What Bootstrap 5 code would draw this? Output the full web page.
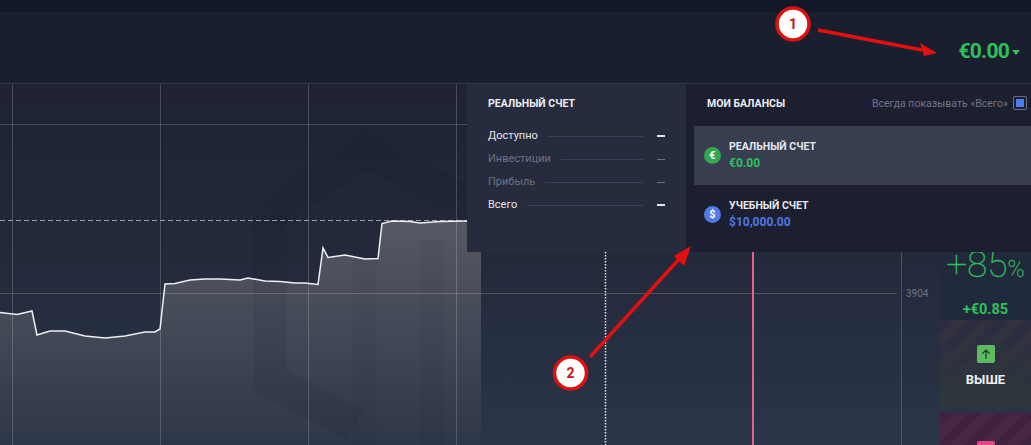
<!DOCTYPE html>
<html lang="ru">
<head>
<meta charset="utf-8">
<title>Балансы</title>
<link href="https://cdn.jsdelivr.net/npm/bootstrap@5.3.0/dist/css/bootstrap.min.css" rel="stylesheet">
<style>
html,body{height:445px;overflow:hidden;background:#1a1e2e;font-family:Roboto,"Liberation Sans",sans-serif}
.stage{width:1031px;height:445px;overflow:hidden}
.strip{height:12px;background:#131826}
.headbar{height:72px;background:#1a1f2f;border-bottom:1px solid #33384a;padding-right:11px}
.bal-top{color:#2fc05a;font-size:21px;font-weight:700;letter-spacing:-.75px;margin-top:8px;margin-right:2px}
.caret-top{width:0;height:0;border:4.5px solid transparent;border-top:5px solid #2fc05a;border-bottom:0;margin:9px 0 0 1px}
.work{height:361px;background:linear-gradient(#1e2233 0,#232a3c 50%,#2b3549 100%)}
.plot{width:940px}
.plot svg{display:block}
.rail{width:91px}
.rail-gap{height:168px;flex:none}
.rate{height:68px;flex:none;background:#212a3c;color:#2fc05a}
.rate-big{font-size:37px;font-weight:100;line-height:36px;margin-top:-5px;-webkit-text-stroke:.3px #2fc05a}
.rate-big small{font-size:23px}
.rate-sum{font-size:14.5px;font-weight:700;margin-top:11px}
.btn-up{height:88px;flex:none;background:linear-gradient(rgba(36,40,56,0),rgba(43,58,56,.75)),repeating-linear-gradient(135deg,#2d2c42 0 10px,#33303f 10px 20px);margin-bottom:5px}
.btn-down{height:60px;flex:none;background:repeating-linear-gradient(135deg,#3f2240 0 10px,#472544 10px 20px);padding-top:28px}
.sq{width:18px;height:18px;border-radius:2px}
.sq-g{background:#5dbb5f;margin-top:6px}
.sq-p{background:#e9447f}
.word{color:#eef0f4;font-size:13px;font-weight:700;margin-top:7px}
.pop{left:467px;top:84px;width:564px;height:168px;color:#fff}
.pop-l{width:219px;background:#272b3e;padding:13px 21px 0}
.pop-r{width:345px;background:#1c1f30}
.ttl{font-size:10.5px;font-weight:700;line-height:13px;color:#eceef2}
.stat{font-size:11px;line-height:13px;height:23px;color:#e4e6ec}
.stat.dim{color:#6d7181}
.stat i{flex:1;height:1px;background:#3a3f53;margin:2px 14px 0 10px;display:block}
.stat b{width:8px;height:2px;background:currentColor;display:block;margin-top:1px}
.stat.dim b{height:1px}
.stats{margin-top:14px}
.opt{color:#717586;font-size:10.5px;line-height:13px}
.chk{width:14px;height:14px;border:1px solid #6b7085;border-radius:2px;margin-left:5px;padding:2px}
.chk span{display:block;width:8px;height:8px;background:#4c7cf0}
.pop-head{height:38px;margin-bottom:4px;padding:0 4px 0 21px}
.acct{height:59px;margin-left:8px;padding-left:10px}
.acct.on{background:#393d50}
.coin{width:17px;height:17px;border-radius:50%;color:#fff;font-size:11px;font-weight:700;line-height:17px;margin-right:8px;text-align:center}
.coin-e{background:#2fa84f}
.coin-d{background:#5479e8}
.nm{font-size:10.5px;font-weight:700;line-height:13px;color:#e6e8ee}
.am{font-size:12px;font-weight:700;line-height:15px;margin-top:3px}
.am-g{color:#2fc05a}
.am-b{color:#4f78e0}
.notes{left:0;top:0;pointer-events:none}
</style>
</head>
<body>
<div class="stage position-relative">
  <div class="strip"></div>
  <header class="headbar d-flex justify-content-end align-items-center">
    <span class="bal-top">€0.00</span><span class="caret-top"></span>
  </header>
  <main class="work d-flex">
    <section class="plot">
      <svg width="940" height="361" viewBox="0 84 940 361">
        <defs>
          <linearGradient id="fillg" x1="0" y1="0" x2="0" y2="1">
            <stop offset="0" stop-color="#565963"/>
            <stop offset="1" stop-color="#2e3749"/>
          </linearGradient>
        </defs>
        <polygon points="0,312.5 17,314.5 32,311 37,335 50,331 65,331 85,336 105,338 125,336 145,332 155,332 160,329 165,284 175,283.5 190,280 205,279 220,279 240,280 248,278 265,281 280,281.5 295,283 305,283 318,284.5 323,248 328,257.5 345,255 360,258 365,259 378,258.5 382,223.5 392,221 410,221.5 420,223 440,221.5 481,221 481,445 0,445" fill="url(#fillg)"/>
        <g fill="none" stroke="#0f1220" stroke-opacity=".09" stroke-width="34">
          <path d="M270 215 L365 150 L470 205"/>
          <path d="M270 215 V380 L355 425"/>
        </g>
        <path d="M365 250V445M432 240V445" stroke="#0f1220" stroke-opacity=".05" stroke-width="24"/>
        <g stroke="#fff" stroke-opacity=".18" stroke-width="1">
          <path d="M12.500 84V445M160.500 84V445M308.500 84V445M456.500 84V445M901.500 84V445"/>
          <path d="M0 124.500H940M0 293.500H897"/>
        </g>
        <path d="M0 220.500H480" stroke="#b9bcc6" stroke-opacity=".8" stroke-width="1" stroke-dasharray="5 3" fill="none"/>
        <polyline points="0,312.5 17,314.5 32,311 37,335 50,331 65,331 85,336 105,338 125,336 145,332 155,332 160,329 165,284 175,283.5 190,280 205,279 220,279 240,280 248,278 265,281 280,281.5 295,283 305,283 318,284.5 323,248 328,257.5 345,255 360,258 365,259 378,258.5 382,223.5 392,221 410,221.5 420,223 440,221.5 467,221" fill="none" stroke="#eef0f3" stroke-width="1.5"/>
        <path d="M605.500 252V445" stroke="#e8eaee" stroke-width="1.5" stroke-dasharray="1.500 1.500"/>
        <path d="M753 252V445" stroke="#e8608c" stroke-width="2"/>
        <text x="906" y="297" font-size="10" fill="#6d7485" font-family="Roboto">3904</text>
      </svg>
    </section>
    <aside class="rail d-flex flex-column">
      <div class="rail-gap"></div>
      <div class="rate text-center">
        <div class="rate-big">+85<small>%</small></div>
        <div class="rate-sum">+€0.85</div>
      </div>
      <div class="btn-up d-flex flex-column align-items-center justify-content-center">
        <div class="sq sq-g d-flex align-items-center justify-content-center">
          <svg width="12" height="12" viewBox="0 0 12 12"><path d="M6 11V2M2.500 5.500 6 2l3.500 3.500" fill="none" stroke="#1d3a28" stroke-width="1.200"/></svg>
        </div>
        <div class="word">ВЫШЕ</div>
      </div>
      <div class="btn-down d-flex justify-content-center"><div class="sq sq-p"></div></div>
    </aside>
  </main>

  <div class="pop position-absolute d-flex">
    <div class="pop-l">
      <div class="ttl">РЕАЛЬНЫЙ СЧЕТ</div>
      <div class="stats">
        <div class="stat d-flex align-items-center"><span>Доступно</span><i></i><b></b></div>
        <div class="stat dim d-flex align-items-center"><span>Инвестиции</span><i></i><b></b></div>
        <div class="stat dim d-flex align-items-center"><span>Прибыль</span><i></i><b></b></div>
        <div class="stat d-flex align-items-center"><span>Всего</span><i></i><b></b></div>
      </div>
    </div>
    <div class="pop-r">
      <div class="pop-head d-flex align-items-center justify-content-between">
        <span class="ttl">МОИ БАЛАНСЫ</span>
        <span class="opt d-flex align-items-center">Всегда показывать «Всего»<span class="chk"><span></span></span></span>
      </div>
      <div class="acct on d-flex align-items-center">
        <span class="coin coin-e">€</span>
        <div><div class="nm">РЕАЛЬНЫЙ СЧЕТ</div><div class="am am-g">€0.00</div></div>
      </div>
      <div class="acct d-flex align-items-center">
        <span class="coin coin-d">$</span>
        <div><div class="nm">УЧЕБНЫЙ СЧЕТ</div><div class="am am-b">$10,000.00</div></div>
      </div>
    </div>
  </div>

  <svg class="notes position-absolute" width="1031" height="445" viewBox="0 0 1031 445">
    <path d="M818 30 L922 50" stroke="#e60f0f" stroke-width="3.500"/>
    <polygon points="937,53 920,43 924,56" fill="#e60f0f"/>
    <path d="M590 357 L680 258" stroke="#e60f0f" stroke-width="3.500"/>
    <polygon points="691,246 674,256 684,266" fill="#e60f0f"/>
    <circle cx="793" cy="24" r="16" fill="#fff" stroke="#e00f0f" stroke-width="3.500"/>
    <circle cx="570.500" cy="373" r="16" fill="#fff" stroke="#e00f0f" stroke-width="3.500"/>
    <text x="793" y="29" text-anchor="middle" font-size="14" font-weight="700" fill="#d01212" font-family="Roboto">1</text>
    <text x="570.500" y="378" text-anchor="middle" font-size="14" font-weight="700" fill="#d01212" font-family="Roboto">2</text>
  </svg>
</div>
<script src="https://cdn.jsdelivr.net/npm/bootstrap@5.3.0/dist/js/bootstrap.bundle.min.js"></script>
</body>
</html>
